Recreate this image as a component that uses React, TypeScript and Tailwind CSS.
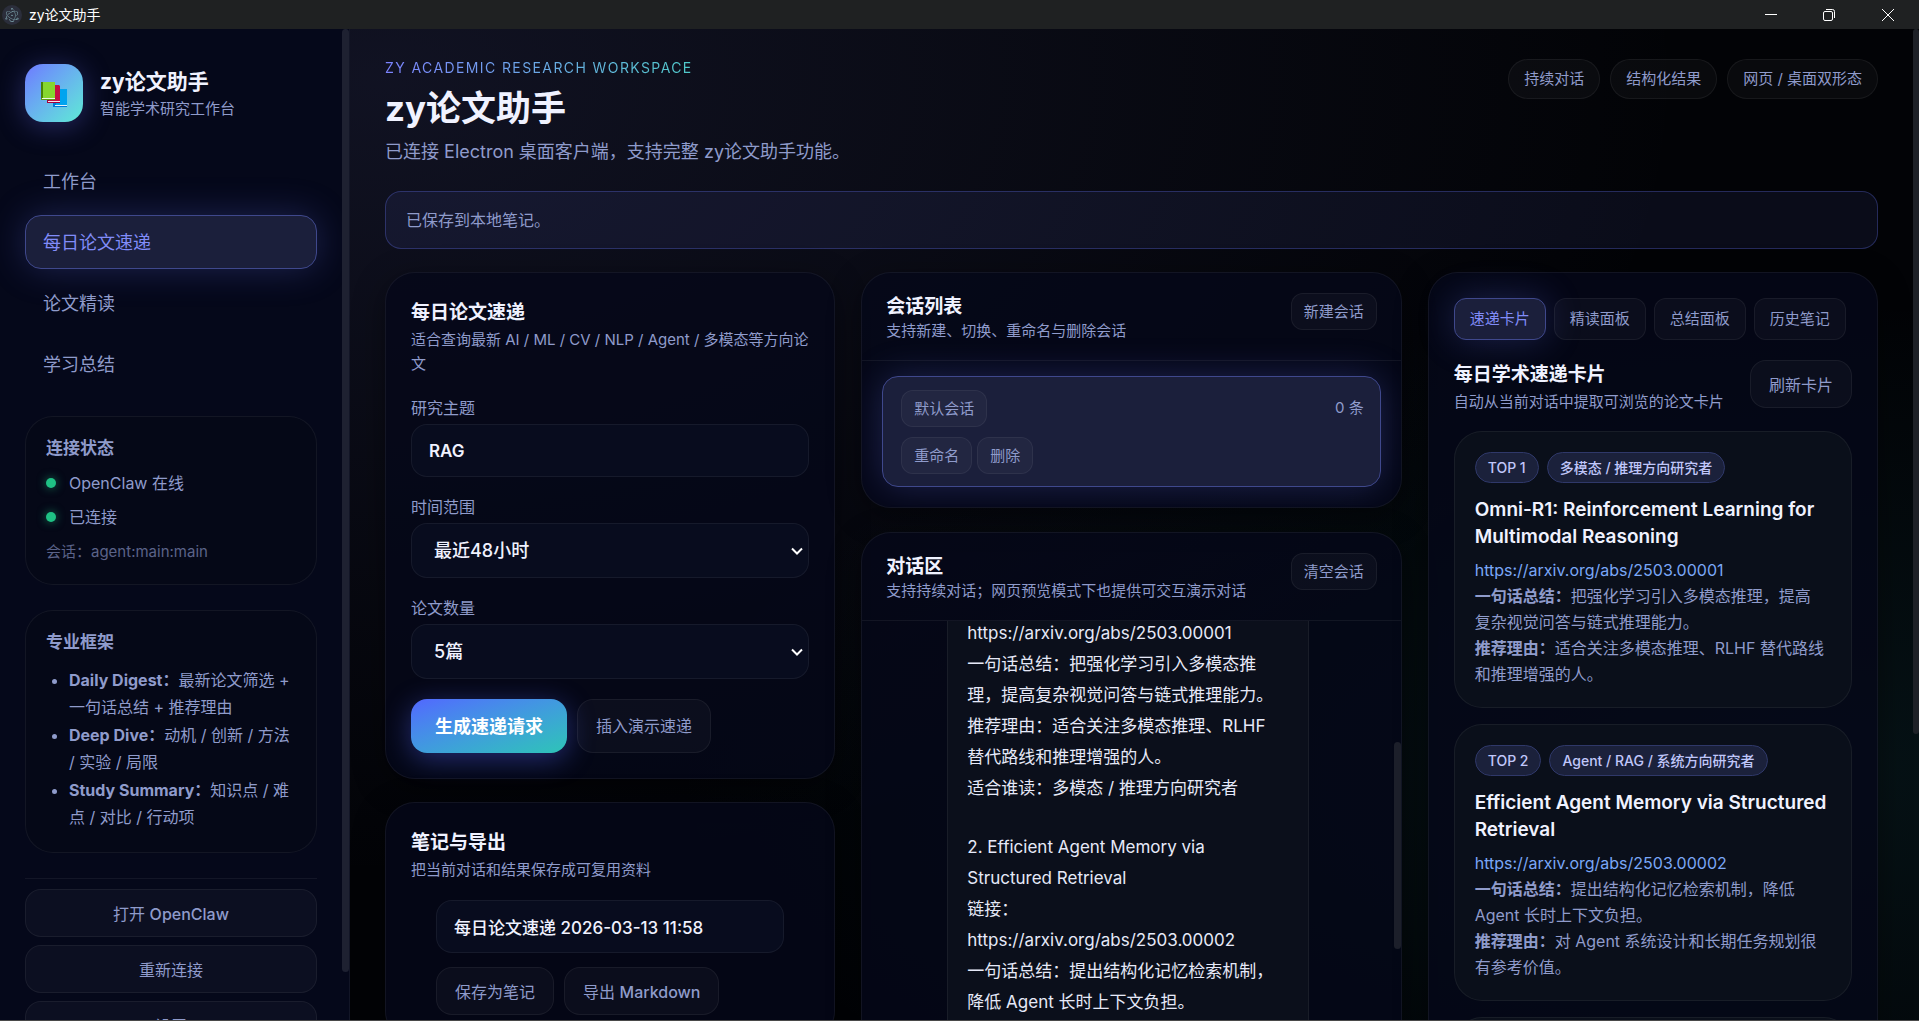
import type { ReactNode } from "react";
import { SiElectron } from "react-icons/si";

const navItems = ["工作台", "每日论文速递", "论文精读", "学习总结"];

const frameworks = [
  { name: "Daily Digest：", text: "最新论文筛选 + 一句话总结 + 推荐理由" },
  { name: "Deep Dive：", text: "动机 / 创新 / 方法 / 实验 / 局限" },
  { name: "Study Summary：", text: "知识点 / 难点 / 对比 / 行动项" },
];

const featurePills = ["持续对话", "结构化结果", "网页 / 桌面双形态"];

const tabs = ["速递卡片", "精读面板", "总结面板", "历史笔记"];

const papers = [
  {
    rank: "TOP 1",
    audience: "多模态 / 推理方向研究者",
    title: "Omni-R1: Reinforcement Learning for Multimodal Reasoning",
    url: "https://arxiv.org/abs/2503.00001",
    summary: "把强化学习引入多模态推理，提高复杂视觉问答与链式推理能力。",
    reason: "适合关注多模态推理、RLHF 替代路线和推理增强的人。",
  },
  {
    rank: "TOP 2",
    audience: "Agent / RAG / 系统方向研究者",
    title: "Efficient Agent Memory via Structured Retrieval",
    url: "https://arxiv.org/abs/2503.00002",
    summary: "提出结构化记忆检索机制，降低 Agent 长时上下文负担。",
    reason: "对 Agent 系统设计和长期任务规划很有参考价值。",
  },
];

const chatBlocks = [
  [
    "https://arxiv.org/abs/2503.00001",
    "一句话总结：把强化学习引入多模态推理，提高复杂视觉问答与链式推理能力。",
    "推荐理由：适合关注多模态推理、RLHF 替代路线和推理增强的人。",
    "适合谁读：多模态 / 推理方向研究者",
  ],
  [
    "2. Efficient Agent Memory via Structured Retrieval",
    "链接：",
    "https://arxiv.org/abs/2503.00002",
    "一句话总结：提出结构化记忆检索机制，降低 Agent 长时上下文负担。",
  ],
];

const activeGlow =
  "border border-[#3f488c] bg-[#1b1f3b] shadow-[0_0_36px_rgba(99,112,241,0.26)]";

function TitleBar() {
  return (
    <header className="flex h-[29px] shrink-0 items-center bg-[#1f2122] text-white">
      <span className="ml-0.5 flex size-5 items-center justify-center rounded-full bg-[#2b2e3b] text-[#9fd3dc]">
        <SiElectron className="size-3.5" />
      </span>
      <span className="ml-[7px] text-[14px]">zy论文助手</span>
      <div className="ml-auto flex h-full">
        <button type="button" aria-label="最小化" className="flex w-[60px] items-center justify-center">
          <svg className="size-3" viewBox="0 0 12 12" stroke="currentColor">
            <path d="M0 5.5h12" />
          </svg>
        </button>
        <button type="button" aria-label="还原" className="flex w-14 items-center justify-center">
          <svg className="size-3" viewBox="0 0 12 12" fill="none" stroke="currentColor">
            <rect x="0.5" y="2.5" width="9" height="9" rx="1.5" />
            <path d="M3 .5h6.5a2 2 0 0 1 2 2V9" />
          </svg>
        </button>
        <button type="button" aria-label="关闭" className="flex w-[62px] items-center justify-center">
          <svg className="size-3" viewBox="0 0 12 12" stroke="currentColor">
            <path d="M0 0l12 12M12 0L0 12" />
          </svg>
        </button>
      </div>
    </header>
  );
}

function BooksIcon() {
  return (
    <svg className="size-7" viewBox="0 -2 28 28" aria-hidden="true">
      <path d="M14 8h13v17H14z" fill="#00a4ef" />
      <path d="M13 9l1-1h2v18h-3z" fill="#0078d7" />
      <path d="M14 24h13v2H14z" fill="#0078d7" />
      <path d="M15 24h12v1H15z" fill="#e6f2fa" />
      <path d="M7 4h12l1 1v16H7z" fill="#c50f45" />
      <path d="M7 4h2v18H7z" fill="#8e0a3a" />
      <path d="M7 20h13v2H7z" fill="#a4003c" />
      <path d="M8 20h12v1H8z" fill="#f6e6ec" />
      <path d="M1 1h14v17H1z" fill="#86d72f" />
      <path d="M1 1h2v18H1z" fill="#498205" />
      <path d="M1 17h14v2H1z" fill="#5a9a14" />
      <path d="M2 17h13v1H2z" fill="#eef8e2" />
    </svg>
  );
}

function GhostButton({ size = "md", children }: { size?: "sm" | "md"; children: ReactNode }) {
  const sizing =
    size === "sm"
      ? "h-[37px] rounded-xl px-3 text-[15px]"
      : "h-12 rounded-2xl px-[18px] text-[16px]";
  return (
    <button
      type="button"
      className={`shrink-0 whitespace-nowrap border border-white/6 bg-white/3 pt-0.5 text-[#8f9bcb] ${sizing}`}
    >
      {children}
    </button>
  );
}

function Card({ className = "", children }: { className?: string; children: ReactNode }) {
  return (
    <section
      className={`rounded-[30px] border border-white/6 bg-[#050819]/80 shadow-[0_8px_32px_rgba(0,0,0,0.4)] ${className}`}
    >
      {children}
    </section>
  );
}

function CardTitle({ title, desc }: { title: string; desc: string }) {
  return (
    <div>
      <h2 className="text-[19px] leading-[30px] font-bold text-[#f0f2ff]">{title}</h2>
      <p className="text-[15px] leading-6 text-[#8f9bcb]">{desc}</p>
    </div>
  );
}

function PanelHeader({ title, desc, action }: { title: string; desc: string; action: string }) {
  return (
    <div className="flex items-start justify-between border-b border-white/6 px-6 pt-5 pb-[19px]">
      <div>
        <h2 className="text-[19px] leading-[28px] font-bold text-[#f0f2ff]">{title}</h2>
        <p className="text-[15px] leading-5 text-[#8f9bcb]">{desc}</p>
      </div>
      <GhostButton size="sm">{action}</GhostButton>
    </div>
  );
}

function SelectField({ id, label, value }: { id: string; label: string; value: string }) {
  return (
    <div className="mt-[18px]">
      <label htmlFor={id} className="block text-[16px] leading-6 text-[#8f9bcb]">
        {label}
      </label>
      <div className="relative mt-1">
        <select
          id={id}
          className="block h-[55px] w-full appearance-none rounded-2xl border border-white/6 bg-[#080c1e] px-[22px] text-[18px] font-medium text-[#f0f2ff]"
        >
          <option>{value}</option>
        </select>
        <svg
          className="pointer-events-none absolute top-1/2 right-[6px] size-3 -translate-y-1/2"
          viewBox="0 0 12 12"
          fill="none"
          stroke="#fff"
          strokeWidth="2"
        >
          <path d="M1 3.5l5 5 5-5" />
        </svg>
      </div>
    </div>
  );
}

function Sidebar() {
  return (
    <aside className="flex w-[350px] shrink-0 overflow-hidden border-r border-white/6 bg-[#05081a]">
      <div className="min-w-0 flex-1 px-[25px] pt-[35px]">
        <div className="flex items-center gap-[17px]">
          <div className="flex size-[58px] items-center justify-center rounded-[18px] bg-linear-to-br from-[#6e78ff] to-[#5eead4] shadow-[0_4px_28px_rgba(99,102,241,0.35)]">
            <BooksIcon />
          </div>
          <div className="pt-0.5">
            <p className="text-[21px] leading-[30px] font-bold text-[#f0f2ff]">zy论文助手</p>
            <p className="text-[15px] leading-6 text-[#8f9bcb]">智能学术研究工作台</p>
          </div>
        </div>

        <nav className="mt-8 flex flex-col gap-[7px]">
          {navItems.map((item, i) => (
            <button
              key={item}
              type="button"
              className={`h-[54px] rounded-2xl px-[17px] text-left text-[18px] ${
                i === 1 ? `${activeGlow} text-[#818cf8]` : "border border-transparent text-[#8f9bcb]"
              }`}
            >
              {item}
            </button>
          ))}
        </nav>

        <section className="mt-[25px] rounded-[28px] border border-white/6 bg-[#050817] px-5 pt-[18px] pb-[19px] text-[#8f9bcb]">
          <h3 className="text-[17px] leading-[26px] font-bold">连接状态</h3>
          <div className="mt-[9px] flex flex-col gap-2 text-[16px] leading-[26px]">
            {["OpenClaw 在线", "已连接"].map((status) => (
              <p key={status} className="flex items-center gap-[13px]">
                <span className="size-2.5 rounded-full bg-[#1fc184] shadow-[0_0_10px_rgba(31,193,132,0.6)]" />
                {status}
              </p>
            ))}
          </div>
          <p className="mt-[9px] text-[15px] leading-[26px] text-[#5b6389]">会话：agent:main:main</p>
        </section>

        <section className="mt-[25px] rounded-[28px] border border-white/6 bg-[#050817] px-5 pt-[18px] pb-[21px] text-[#8f9bcb]">
          <h3 className="text-[17px] leading-[26px] font-bold">专业框架</h3>
          <ul className="mt-3 flex list-disc flex-col gap-px pl-[23px] text-[16px] leading-[27px]">
            {frameworks.map((item) => (
              <li key={item.name}>
                <strong>{item.name}</strong>
                {item.text}
              </li>
            ))}
          </ul>
        </section>

        <div className="mt-[25px] flex flex-col gap-2 border-t border-white/6 pt-2.5">
          <GhostButton>
            打开 <span className="font-medium">OpenClaw</span>
          </GhostButton>
          <GhostButton>重新连接</GhostButton>
          <GhostButton>设置</GhostButton>
        </div>
      </div>
      <div className="h-[943px] w-[7px] shrink-0 rounded-full bg-[#1e2131]" />
    </aside>
  );
}

function DigestForm() {
  return (
    <Card className="p-[25px]">
      <CardTitle
        title="每日论文速递"
        desc="适合查询最新 AI / ML / CV / NLP / Agent / 多模态等方向论文"
      />
      <div className="mt-5">
        <label htmlFor="topic" className="block text-[16px] leading-6 text-[#8f9bcb]">
          研究主题
        </label>
        <input
          id="topic"
          defaultValue="RAG"
          className="mt-1 block h-[53px] w-full rounded-2xl border border-white/6 bg-[#080c1e] px-[17px] text-[17px] font-semibold text-[#f0f2ff]"
        />
      </div>
      <SelectField id="range" label="时间范围" value="最近48小时" />
      <SelectField id="count" label="论文数量" value="5篇" />
      <div className="mt-5 flex gap-2.5">
        <button
          type="button"
          className="h-[54px] rounded-2xl bg-linear-to-br from-[#5266ff] to-[#2ec4b6] px-6 text-[18px] font-bold text-white shadow-[0_6px_28px_rgba(82,102,255,0.4)]"
        >
          生成速递请求
        </button>
        <button
          type="button"
          className="h-[54px] rounded-2xl border border-white/6 bg-white/3 px-[18px] text-[16px] text-[#8f9bcb]"
        >
          插入演示速递
        </button>
      </div>
    </Card>
  );
}

function NotesExport() {
  return (
    <Card className="p-[25px]">
      <CardTitle title="笔记与导出" desc="把当前对话和结果保存成可复用资料" />
      <div className="mt-[18px] px-[25px]">
        <input
          aria-label="笔记标题"
          defaultValue="每日论文速递 2026-03-13 11:58"
          className="block h-[53px] w-full rounded-2xl border border-white/6 bg-[#080c1e] px-[17px] text-[17px] font-medium text-[#f0f2ff]"
        />
        <div className="mt-3.5 flex gap-2.5">
          <GhostButton>保存为笔记</GhostButton>
          <GhostButton>
            导出 <span className="font-medium">Markdown</span>
          </GhostButton>
        </div>
      </div>
    </Card>
  );
}

function SessionList() {
  return (
    <Card className="overflow-hidden">
      <PanelHeader title="会话列表" desc="支持新建、切换、重命名与删除会话" action="新建会话" />
      <div className="px-5 pt-[15px] pb-5">
        <div className={`rounded-2xl pt-[13px] pr-4 pb-3 pl-[18px] ${activeGlow}`}>
          <div className="flex items-center justify-between">
            <GhostButton size="sm">默认会话</GhostButton>
            <span className="text-[15px] text-[#8f9bcb]">0 条</span>
          </div>
          <div className="mt-2.5 flex gap-[5px]">
            <GhostButton size="sm">重命名</GhostButton>
            <GhostButton size="sm">删除</GhostButton>
          </div>
        </div>
      </div>
    </Card>
  );
}

function ChatPanel() {
  return (
    <Card className="overflow-hidden">
      <PanelHeader
        title="对话区"
        desc="支持持续对话；网页预览模式下也提供可交互演示对话"
        action="清空会话"
      />
      <div className="flex overflow-hidden">
        <div className="-mt-[3px] flex-1 px-[85px]">
          <div className="flex flex-col gap-[28px] border-x border-white/6 bg-[#0b0f1b] pr-6 pb-10 pl-[19px] text-[17px] leading-[31px] text-[#e6e9f8]">
            {chatBlocks.map((lines) => (
              <div key={lines[0]}>
                {lines.map((line) => (
                  <p key={line}>{line}</p>
                ))}
              </div>
            ))}
          </div>
        </div>
        <div className="mt-[121px] h-[207px] w-[7px] rounded-full bg-[#1d202b]" />
      </div>
    </Card>
  );
}

function PaperCard({ paper }: { paper: (typeof papers)[number] }) {
  const tag =
    "flex h-[31px] items-center rounded-full border border-[#2f3869] bg-[#1b213b] px-3 text-[14px] font-medium text-[#c0c7fa]";
  return (
    <article className="rounded-[28px] border border-white/6 bg-[#0a0f1a] px-5 py-5 text-[16px] leading-[26px] text-[#8f9bcb]">
      <div className="flex gap-2">
        <span className={tag}>{paper.rank}</span>
        <span className={tag}>{paper.audience}</span>
      </div>
      <h3 className="mt-[13px] text-[19px] leading-[27px] font-semibold text-[#f0f2ff]">{paper.title}</h3>
      <a href={paper.url} className="mt-[7px] block text-[#7aa7f7]">
        {paper.url}
      </a>
      <div className="pr-[5px]">
        <p>
          <strong>一句话总结：</strong>
          {paper.summary}
        </p>
        <p>
          <strong>推荐理由：</strong>
          {paper.reason}
        </p>
      </div>
    </article>
  );
}

function ResultsPanel() {
  return (
    <Card className="p-[25px]">
      <div role="tablist" className="flex gap-2">
        {tabs.map((tab, i) => (
          <button
            key={tab}
            type="button"
            role="tab"
            aria-selected={i === 0}
            className={`h-[42px] rounded-xl px-[15px] text-[15px] whitespace-nowrap ${
              i === 0 ? `${activeGlow} text-[#818cf8]` : "border border-white/6 bg-white/3 text-[#8f9bcb]"
            }`}
          >
            {tab}
          </button>
        ))}
      </div>
      <div className="mt-5 flex items-start justify-between">
        <CardTitle title="每日学术速递卡片" desc="自动从当前对话中提取可浏览的论文卡片" />
        <GhostButton>刷新卡片</GhostButton>
      </div>
      <div className="mt-[17px] flex flex-col gap-4">
        {papers.map((paper) => (
          <PaperCard key={paper.rank} paper={paper} />
        ))}
        <div className="h-40 rounded-[28px] border border-white/6 bg-[#0a0f1a]" />
      </div>
    </Card>
  );
}

function Workspace() {
  return (
    <main className="min-w-0 flex-1 px-[35px] pt-[27px]">
      <div className="flex items-start justify-between">
        <div>
          <p className="w-fit bg-linear-to-r from-[#7c83ff] to-[#4fc9c9] bg-clip-text text-[14px] leading-6 tracking-widest text-transparent">
            ZY ACADEMIC RESEARCH WORKSPACE
          </p>
          <h1 className="text-[35px] leading-[56px] font-bold text-[#f0f2ff]">zy论文助手</h1>
          <p className="mt-0.5 text-[18px] leading-[28px] text-[#8f9bcb]">
            已连接 Electron 桌面客户端，支持完整 zy论文助手功能。
          </p>
        </div>
        <div className="mt-[3px] flex gap-2.5">
          {featurePills.map((pill) => (
            <span
              key={pill}
              className="flex h-10 items-center rounded-full border border-white/6 bg-white/3 px-[15px] text-[15px] text-[#8f9bcb]"
            >
              {pill}
            </span>
          ))}
        </div>
      </div>

      <div
        role="status"
        className="mt-[25px] flex h-[58px] items-center rounded-2xl border border-[#6373f6]/30 bg-[#6e84ff]/8 px-5 text-[16px] text-[#8f9bcb]"
      >
        已保存到本地笔记。
      </div>

      <div className="mt-[23px] grid grid-cols-[minmax(0,1fr)_minmax(0,1.2fr)_minmax(0,1fr)] items-start gap-[26px]">
        <div className="flex flex-col gap-[23px]">
          <DigestForm />
          <NotesExport />
        </div>
        <div className="flex flex-col gap-6">
          <SessionList />
          <ChatPanel />
        </div>
        <ResultsPanel />
      </div>
    </main>
  );
}

export default function App() {
  return (
    <div className="flex h-screen flex-col overflow-hidden border-b border-[#4a4a4a] bg-[#020306] font-[Inter,'Noto_Sans_CJK_SC',sans-serif]">
      <TitleBar />
      <div className="flex min-h-0 flex-1 overflow-hidden bg-[radial-gradient(ellipse_at_20%_5%,rgba(115,120,225,0.13),transparent_60%),radial-gradient(ellipse_at_95%_75%,rgba(45,170,180,0.09),transparent_45%)]">
        <Sidebar />
        <Workspace />
        <div className="h-[705px] w-1.5 shrink-0 rounded-full bg-[#1e2127]" />
      </div>
    </div>
  );
}
